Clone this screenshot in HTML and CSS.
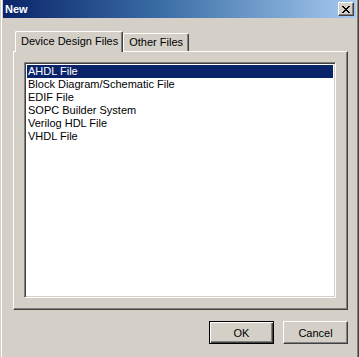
FILE: index.html
```html
<!DOCTYPE html>
<html>
<head>
<meta charset="utf-8">
<link rel="stylesheet" href="styles.css">
</head>
<body>
<div class="window">
  <div class="titlebar">
    <span class="title">New</span>
    <span class="close"><svg width="10" height="9" viewBox="0 0 10 9"><path d="M1 1 L8 8 M2 1 L9 8 M8 1 L1 8 M9 1 L2 8" stroke="#000" stroke-width="1" shape-rendering="crispEdges" fill="none"/></svg></span>
  </div>
  <div class="body">
    <div class="tabs">
      <div class="tab active">Device Design Files</div>
      <div class="tab">Other Files</div>
    </div>
    <div class="panel">
      <div class="listbox">
        <div class="item selected">AHDL File</div>
        <div class="item">Block Diagram/Schematic File</div>
        <div class="item">EDIF File</div>
        <div class="item">SOPC Builder System</div>
        <div class="item">Verilog HDL File</div>
        <div class="item">VHDL File</div>
      </div>
    </div>
    <div class="buttons">
      <div class="btn default"><span>OK</span></div>
      <div class="btn"><span>Cancel</span></div>
    </div>
  </div>
</div>
</body>
</html>
```
FILE: styles.css
```css
html, body {
  margin: 0;
  padding: 0;
  background: #d4d0c8;
}
body {
  font-family: "Liberation Sans", Arial, sans-serif;
  font-size: 11px;
  color: #000;
}
.window {
  box-sizing: border-box;
  width: 359px;
  height: 357px;
  background: #d4d0c8;
  padding: 0 3px 0 3px;
  box-shadow: inset 1px 0 #d4d0c8, inset 2px 0 #fff, inset -1px 0 #404040, inset -2px 0 #808080;
  display: flex;
  flex-direction: column;
}
.titlebar {
  height: 18px;
  background: linear-gradient(to right, #0a246a 0%, #3a6ea5 45%, #a6caf0 100%);
  display: flex;
  align-items: center;
  justify-content: space-between;
  padding: 0 2px 0 2px;
}
.title {
  color: #fff;
  font-weight: bold;
  font-size: 11px;
  font-family: "Liberation Sans", Arial, sans-serif;
}
.close {
  box-sizing: border-box;
  width: 16px;
  height: 14px;
  background: #d4d0c8;
  border-top: 1px solid #fff;
  border-left: 1px solid #fff;
  border-right: 1px solid #404040;
  border-bottom: 1px solid #404040;
  box-shadow: inset -1px -1px #808080;
  display: flex;
  align-items: center;
  justify-content: center;
}
.close svg { display: block; }
.body {
  padding: 13px 8px 0 10px;
  display: flex;
  flex-direction: column;
}
.tabs {
  display: flex;
  align-items: flex-end;
  padding-left: 2px;
  height: 20px;
}
.tab {
  box-sizing: border-box;
  padding: 2px 5px 0 5px;
  border-top: 1px solid #fff;
  border-left: 1px solid #fff;
  border-right: 1px solid #404040;
  box-shadow: inset -1px 0 #808080;
  border-radius: 2px 2px 0 0;
  background: #d4d0c8;
  white-space: nowrap;
  margin-bottom: -1px;
  height: 19px;
}
.tab.active {
  height: 21px;
  padding: 3px 4px 0 5px;
  position: relative;
  z-index: 1;
  margin-bottom: -1px;
}
.panel {
  box-sizing: border-box;
  width: 335px;
  height: 259px;
  border-top: 1px solid #fff;
  border-left: 1px solid #fff;
  border-right: 1px solid #404040;
  border-bottom: 1px solid #404040;
  box-shadow: inset -1px -1px #808080;
  padding: 10px 11px 11px 10px;
  display: flex;
}
.listbox {
  flex: 1;
  background: #fff;
  border-top: 1px solid #808080;
  border-left: 1px solid #808080;
  border-right: 1px solid #fff;
  border-bottom: 1px solid #fff;
  box-shadow: inset 1px 1px #404040, inset -1px -1px #d4d0c8;
  padding: 2px 2px;
}
.item {
  height: 13px;
  line-height: 13px;
  padding-left: 1px;
  white-space: nowrap;
}
.item.selected {
  background: #0a246a;
  color: #fff;
}
.buttons {
  display: flex;
  justify-content: flex-end;
  gap: 9px;
  margin-top: 11px;
  width: 335px;
}
.btn {
  box-sizing: border-box;
  width: 65px;
  height: 23px;
  background: #d4d0c8;
  border-top: 1px solid #fff;
  border-left: 1px solid #fff;
  border-right: 1px solid #404040;
  border-bottom: 1px solid #404040;
  box-shadow: inset -1px -1px #808080;
  display: flex;
  align-items: center;
  justify-content: center;
}
.btn.default {
  border: 1px solid #000;
  box-shadow: inset 1px 1px #fff, inset -1px -1px #404040, inset -2px -2px #808080;
}
```
